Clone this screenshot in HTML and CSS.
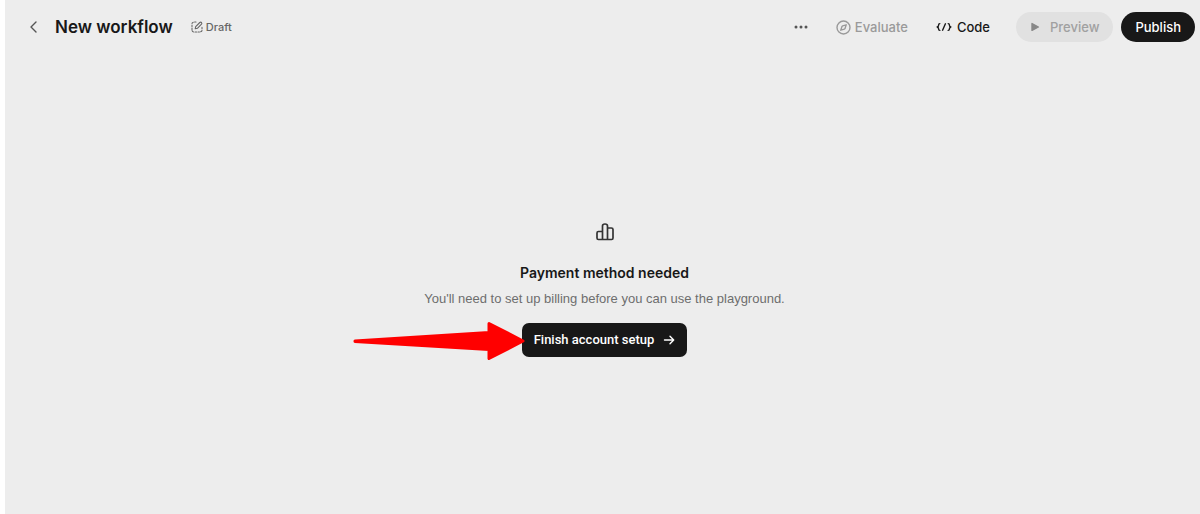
FILE: index.html
```html
<!DOCTYPE html>
<html lang="en">
  <head>
    <meta charset="UTF-8" />
    <meta name="viewport" content="width=device-width, initial-scale=1.0" />
    <title>New workflow</title>
    <link rel="stylesheet" href="styles.css">
  </head>
  <body>
    <header class="topbar">
      <div class="topbar-left">
        <button class="back" type="button" aria-label="Back">
          <svg width="10" height="14" viewBox="0 0 10 14">
            <path d="M7 2 2 7l5 5" />
          </svg>
        </button>
        <h1 class="title">New workflow</h1>
        <span class="status">
          <svg width="12" height="12" viewBox="0 0 12 12">
            <path d="M5 1H3.6M2.3 1.2Q1 1.4 1 2.7M1 4.2v1.4M1 7v1.4M1.1 9.6Q1.4 11 2.8 11M4.2 11h1.4M7 11h1.4M9.6 10.8Q11 10.6 11 9.2M11 7.8V6.4" />
            <path d="M4.2 7.8 4.7 5.6 8.8 1.5Q9.7.8 10.5 1.5 11.2 2.3 10.5 3.2L6.4 7.3Z" />
          </svg>
          Draft
        </span>
      </div>

      <div class="topbar-right">
        <button class="action more" type="button" aria-label="More options">
          <svg width="14" height="4" viewBox="0 0 14 4">
            <circle cx="2" cy="2" r="1.5" />
            <circle cx="7" cy="2" r="1.5" />
            <circle cx="12" cy="2" r="1.5" />
          </svg>
        </button>
        <button class="action evaluate" type="button" disabled>
          <svg width="15" height="15" viewBox="0 0 15 15">
            <circle cx="7.5" cy="7.5" r="6.5" />
            <path d="M10.2 4.8 9.1 8.4 8.4 9.1 4.8 10.2 5.9 6.6 6.6 5.9Z" />
          </svg>
          Evaluate
        </button>
        <button class="action code" type="button">
          <svg width="16" height="10" viewBox="0 0 16 10">
            <path d="M3.8 1.6Q2.6 1.6 2.6 2.9 2.6 4.5 1.2 5 2.6 5.5 2.6 7.1 2.6 8.4 3.8 8.4M12.2 1.6Q13.4 1.6 13.4 2.9 13.4 4.5 14.8 5 13.4 5.5 13.4 7.1 13.4 8.4 12.2 8.4M9.4 1.8 6.6 8.2" />
          </svg>
          Code
        </button>
        <button class="pill preview" type="button" disabled>
          <svg width="10" height="10" viewBox="0 0 10 10">
            <path d="M2 1.6v6.8L8.4 5Z" />
          </svg>
          Preview
        </button>
        <button class="pill publish" type="button">Publish</button>
      </div>
    </header>

    <main class="empty">
      <svg class="empty-icon" width="20" height="20" viewBox="0 0 20 20">
        <path d="M7.5 17.5H3.4Q2 17.5 2 16.1V11Q2 9.5 3.4 9.5H7.5M7.5 17.5V4Q7.5 2 10 2T12.5 4V17.5ZM12.5 6H16.4Q18 6 18 7.5V16.1Q18 17.5 16.6 17.5H12.5" />
      </svg>
      <h2 class="empty-title">Payment method needed</h2>
      <p class="empty-text">You'll need to set up billing before you can use the playground.</p>
      <div class="setup-wrap">
        <button class="setup" type="button">
          Finish account setup
          <svg width="12" height="12" viewBox="0 0 12 12">
            <path d="M1.5 6h9M7 2.3 10.7 6 7 9.7" />
          </svg>
        </button>
        <!-- Red pointer over the button's left edge -->
        <svg class="pointer" width="172" height="40" viewBox="0 0 172 40">
          <path d="M2 20 136 11.5V2.5L170 20 136 37.5V28.5L2 20.5Z" />
        </svg>
      </div>
    </main>
  </body>
</html>
```

FILE: styles.css
```css
* {
  box-sizing: border-box;
}

html {
  background-color: #fff;
}

body {
  margin: 0;
  min-height: 100vh;
  display: flex;
  flex-direction: column;
  border-left: 5px solid #fff;
  background-color: #ededed;
  background-clip: padding-box;
  font-family: Inter, "Liberation Sans", sans-serif;
  font-size: 13px;
  line-height: 20px;
  color: #181818;
}

h1,
h2,
p {
  margin: 0;
}

button {
  border: 0;
  padding: 0;
  background: none;
  color: inherit;
  font: inherit;
  font-weight: 500;
  cursor: pointer;
}

button:disabled {
  cursor: default;
}

svg {
  display: block;
  flex-shrink: 0;
  fill: none;
  stroke: currentColor;
  stroke-width: 1.4;
  stroke-linecap: round;
  stroke-linejoin: round;
}

/* Top bar */
.topbar {
  display: flex;
  justify-content: space-between;
  align-items: center;
  padding: 12px 5px 12px 24px;
}

.topbar-left,
.topbar-right,
.status,
.action,
.pill,
.setup {
  display: flex;
  align-items: center;
}

.back {
  margin-right: 16px;
  color: #555;
}

.title {
  margin-right: 18px;
  font-size: 17px;
  font-weight: 600;
  line-height: 24px;
}

.status {
  gap: 3px;
  color: #666;
  font-size: 11px;
  font-weight: 500;
}

.status svg {
  stroke-width: 1.1;
}

.action {
  gap: 4px;
  margin-right: 28px;
}

.more svg {
  fill: #555;
  stroke: none;
}

.evaluate {
  color: #9a9a9a;
}

.code {
  gap: 5px;
  margin-right: 26px;
}

.pill {
  height: 30px;
  padding: 0 14px;
  border-radius: 15px;
}

.preview {
  gap: 10px;
  margin-right: 8px;
  background-color: #e1e1e1;
  color: #a0a0a0;
}

.preview svg {
  fill: #888;
  stroke: #888;
}

.publish {
  background-color: #181818;
  color: #fff;
}

/* Empty state */
.empty {
  flex: 1;
  display: flex;
  flex-direction: column;
  align-items: center;
  justify-content: center;
  padding: 11px 0 0 4px;
}

.empty-icon {
  margin-bottom: 21px;
  color: #333;
  stroke-width: 1.7;
}

.empty-title {
  margin-bottom: 6px;
  font-size: 14px;
  font-weight: 600;
  line-height: 20px;
}

.empty-text {
  margin-bottom: 14px;
  color: #6e6e6e;
  font-family: "Liberation Sans", Arial, sans-serif;
}

.setup-wrap {
  position: relative;
}

.setup {
  gap: 9px;
  height: 34px;
  padding: 0 12px;
  border-radius: 7px;
  background-color: #181818;
  color: #fff;
  font-family: Roboto, "Liberation Sans", sans-serif;
}

.pointer {
  position: absolute;
  top: -2px;
  right: 100%;
  margin-right: -3px;
  color: #f00;
  fill: #f00;
  stroke-width: 3;
}
```
